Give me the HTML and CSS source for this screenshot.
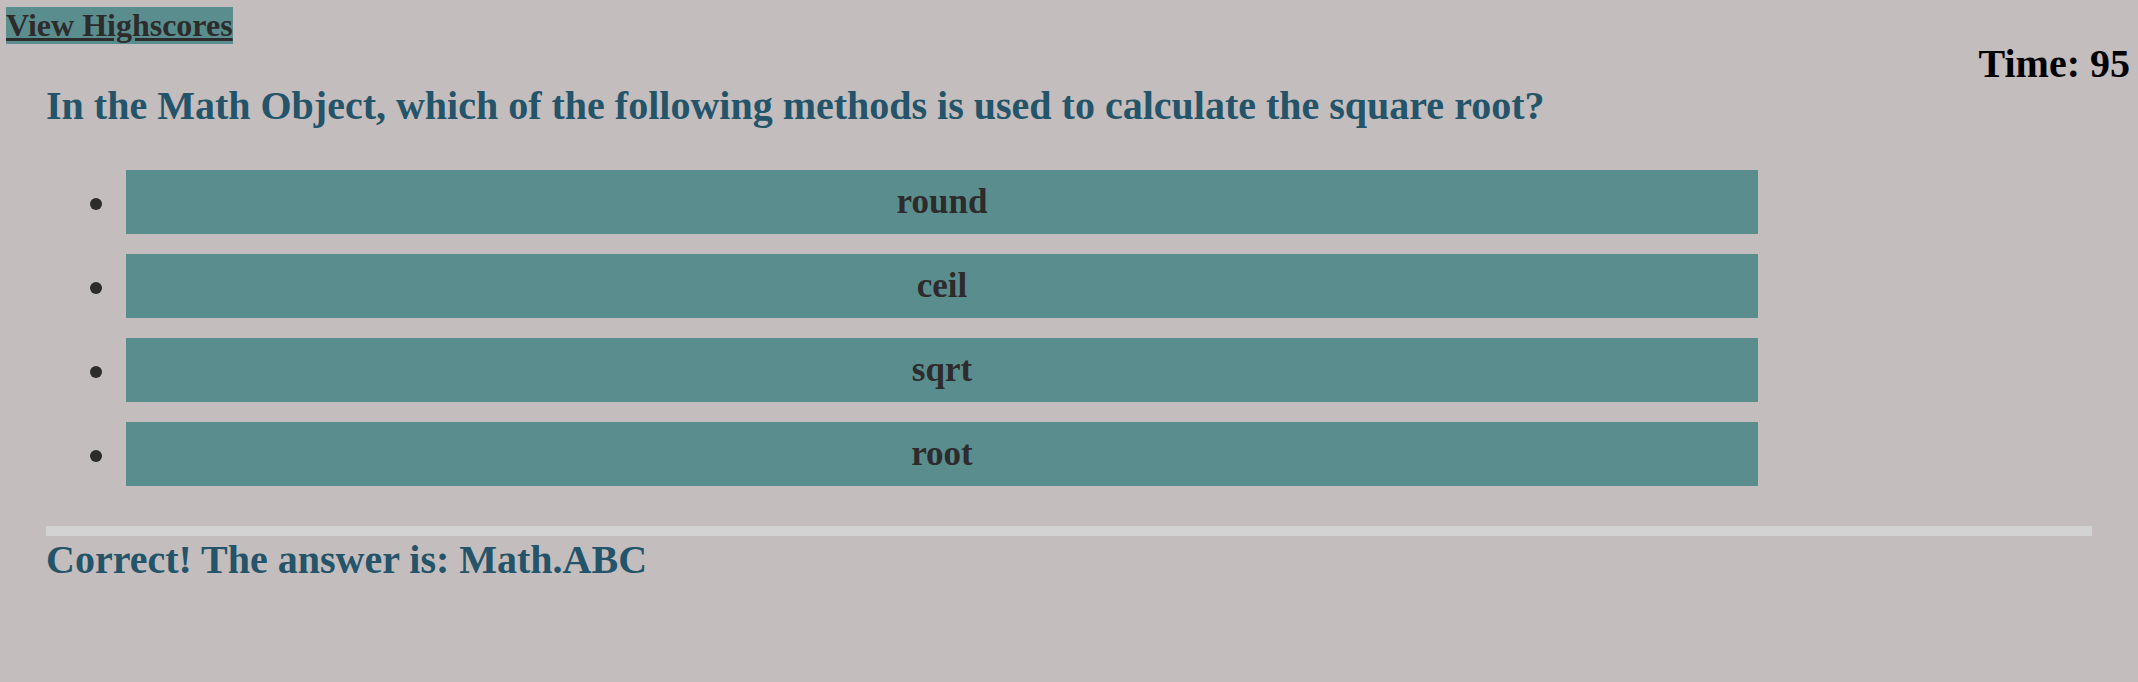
FILE: index.html
```html
<!DOCTYPE html>
<html lang="en">
<head>
<meta charset="utf-8">
<title>Code Quiz</title>
<link rel="stylesheet" href="styles.css">
</head>
<body>
<header class="topbar">
  <a class="highscores" href="#">View Highscores</a>
  <div class="timer">Time: 95</div>
</header>
<main class="quiz">
  <h2 class="question">In the Math Object, which of the following methods is used to calculate the square root?</h2>
  <ul class="choices">
    <li class="choice-item"><button class="choice">round</button></li>
    <li class="choice-item"><button class="choice">ceil</button></li>
    <li class="choice-item"><button class="choice">sqrt</button></li>
    <li class="choice-item"><button class="choice">root</button></li>
  </ul>
  <hr class="divider">
  <p class="feedback">Correct! The answer is: Math.ABC</p>
</main>
</body>
</html>
```

FILE: styles.css
```css
html, body {
  margin: 0;
  padding: 0;
}

body {
  background: #c3bdbd;
  font-family: "Liberation Serif", "Times New Roman", serif;
  font-weight: bold;
  min-height: 682px;
}

.topbar {
  display: flex;
  justify-content: space-between;
  align-items: flex-start;
  padding: 7px 8px 0 6px;
}

.highscores {
  font-size: 32px;
  line-height: normal;
  color: #2d2b2b;
  background: #5a8e8e;
  text-decoration: underline;
}

.timer {
  font-size: 40px;
  line-height: 40px;
  color: #000;
  margin-top: 37px;
}

.quiz {
  padding: 0 46px;
}

.question {
  margin: 0;
  font-size: 40px;
  line-height: 44px;
  color: #23546a;
}

.choices {
  margin: 42px 0 0;
  padding: 0 0 0 80px;
  list-style: none;
}

.choice-item {
  display: flex;
  align-items: center;
}

.choice-item::before {
  content: "";
  flex: none;
  width: 12px;
  height: 12px;
  margin: 4px 24px 0 -36px;
  border-radius: 50%;
  background: #2d2b2b;
}

.choice-item + .choice-item {
  margin-top: 20px;
}

.choice {
  display: block;
  flex: none;
  width: 1632px;
  height: 64px;
  margin: 0;
  padding: 0;
  border: 0;
  background: #5a8e8e;
  color: #2d2b2b;
  font-family: inherit;
  font-weight: bold;
  font-size: 35px;
  line-height: 64px;
  text-align: center;
  cursor: pointer;
}

.divider {
  margin: 40px 0 0;
  height: 10px;
  border: 0;
  background: #d3d3d3;
}

.feedback {
  margin: 0;
  font-size: 40px;
  line-height: normal;
  color: #23546a;
}
```
